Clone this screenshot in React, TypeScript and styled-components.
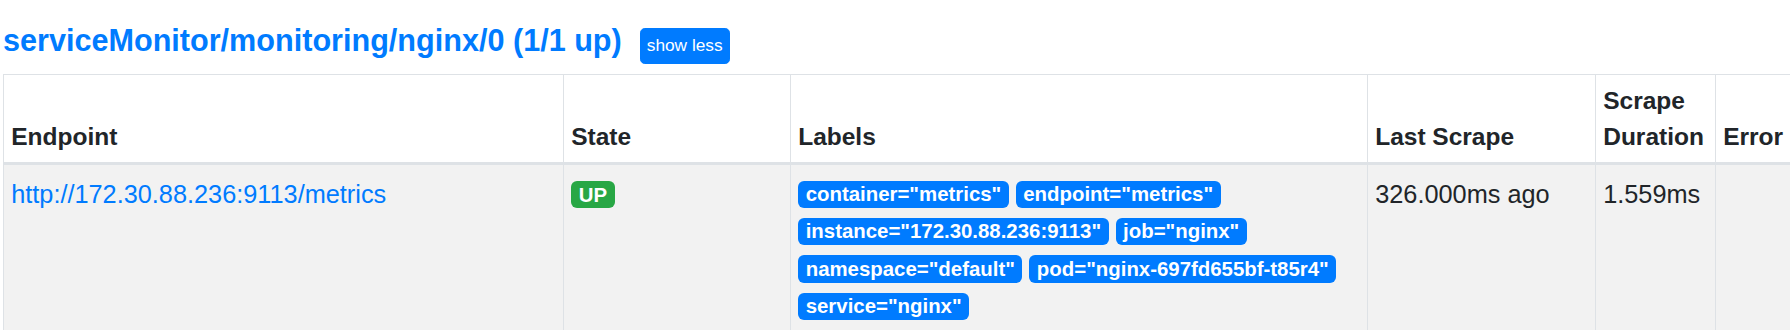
import React from "react";
import styled, { createGlobalStyle } from "styled-components";

const GlobalStyle = createGlobalStyle`
  html, body {
    margin: 0;
    padding: 0;
    overflow: hidden;
    background: #ffffff;
  }
  body {
    font-family: "Liberation Sans", Arial, sans-serif;
    color: #212529;
  }
`;

const Page = styled.div`
  padding: 22px 0 0 3px;
`;

const PoolHeader = styled.div`
  display: flex;
  align-items: baseline;
  gap: 18px;
  margin-bottom: 10px;
`;

const PoolTitle = styled.a`
  font-size: 30.6px;
  font-weight: 700;
  line-height: 36px;
  color: #007bff;
  text-decoration: none;
  white-space: nowrap;
`;

const ToggleButton = styled.button`
  font-family: inherit;
  font-size: 17.3px;
  line-height: 25.5px;
  padding: 4.5px 6px;
  color: #ffffff;
  background: #007bff;
  border: 1px solid #007bff;
  border-radius: 4.8px;
  cursor: pointer;
`;

const Table = styled.table`
  table-layout: fixed;
  width: 1812px;
  border-collapse: collapse;
  border: 1px solid #dee2e6;
`;

const Th = styled.th`
  text-align: left;
  vertical-align: bottom;
  font-size: 24.5px;
  font-weight: 700;
  line-height: 36px;
  padding: 7.5px 7.2px;
  border: 1px solid #dee2e6;
  border-bottom: 3px solid #dee2e6;
`;

const Td = styled.td`
  vertical-align: top;
  font-size: 25.3px;
  line-height: 36px;
  padding: 10.5px 7.2px 14px;
  border: 1px solid #dee2e6;
  background: #f2f2f2;
  white-space: nowrap;
`;

const EndpointLink = styled.a`
  color: #007bff;
  text-decoration: none;
`;

const Badge = styled.span<{ $tone: "primary" | "success" }>`
  display: inline-block;
  font-size: 20.4px;
  font-weight: 700;
  line-height: 1;
  padding: 3.5px 7.5px;
  border-radius: 6px;
  color: #ffffff;
  background: ${p => (p.$tone === "success" ? "#28a745" : "#007bff")};
  white-space: nowrap;
`;

const StateCell = styled.div`
  padding-top: 5px;
  line-height: 1;
`;

const LabelList = styled.div`
  display: flex;
  flex-wrap: wrap;
  row-gap: 10px;
  column-gap: 7px;
  margin-top: 5px;
  white-space: normal;
`;

const COLUMNS = [
    { title: "Endpoint", width: 560 },
    { title: "State", width: 227 },
    { title: "Labels", width: 577 },
    { title: "Last Scrape", width: 228 },
    { title: "Scrape Duration", width: 120 },
    { title: "Error", width: 100 }
];

const LABELS = [
    'container="metrics"',
    'endpoint="metrics"',
    'instance="172.30.88.236:9113"',
    'job="nginx"',
    'namespace="default"',
    'pod="nginx-697fd655bf-t85r4"',
    'service="nginx"'
];

export default function App(): JSX.Element {
    return (
        <Page>
            <GlobalStyle />
            <PoolHeader>
                <PoolTitle href="#pool-serviceMonitor/monitoring/nginx/0">
                    serviceMonitor/monitoring/nginx/0 (1/1 up)
                </PoolTitle>
                <ToggleButton>show less</ToggleButton>
            </PoolHeader>
            <Table>
                <colgroup>
                    {COLUMNS.map(c => (
                        <col key={c.title} style={{ width: c.width }} />
                    ))}
                </colgroup>
                <thead>
                    <tr>
                        {COLUMNS.map(c => (
                            <Th key={c.title}>{c.title}</Th>
                        ))}
                    </tr>
                </thead>
                <tbody>
                    <tr>
                        <Td>
                            <EndpointLink href="#">http://172.30.88.236:9113/metrics</EndpointLink>
                        </Td>
                        <Td>
                            <StateCell>
                                <Badge $tone="success">UP</Badge>
                            </StateCell>
                        </Td>
                        <Td>
                            <LabelList>
                                {LABELS.map(l => (
                                    <Badge key={l} $tone="primary">{l}</Badge>
                                ))}
                            </LabelList>
                        </Td>
                        <Td>326.000ms ago</Td>
                        <Td>1.559ms</Td>
                        <Td></Td>
                    </tr>
                </tbody>
            </Table>
        </Page>
    );
}
